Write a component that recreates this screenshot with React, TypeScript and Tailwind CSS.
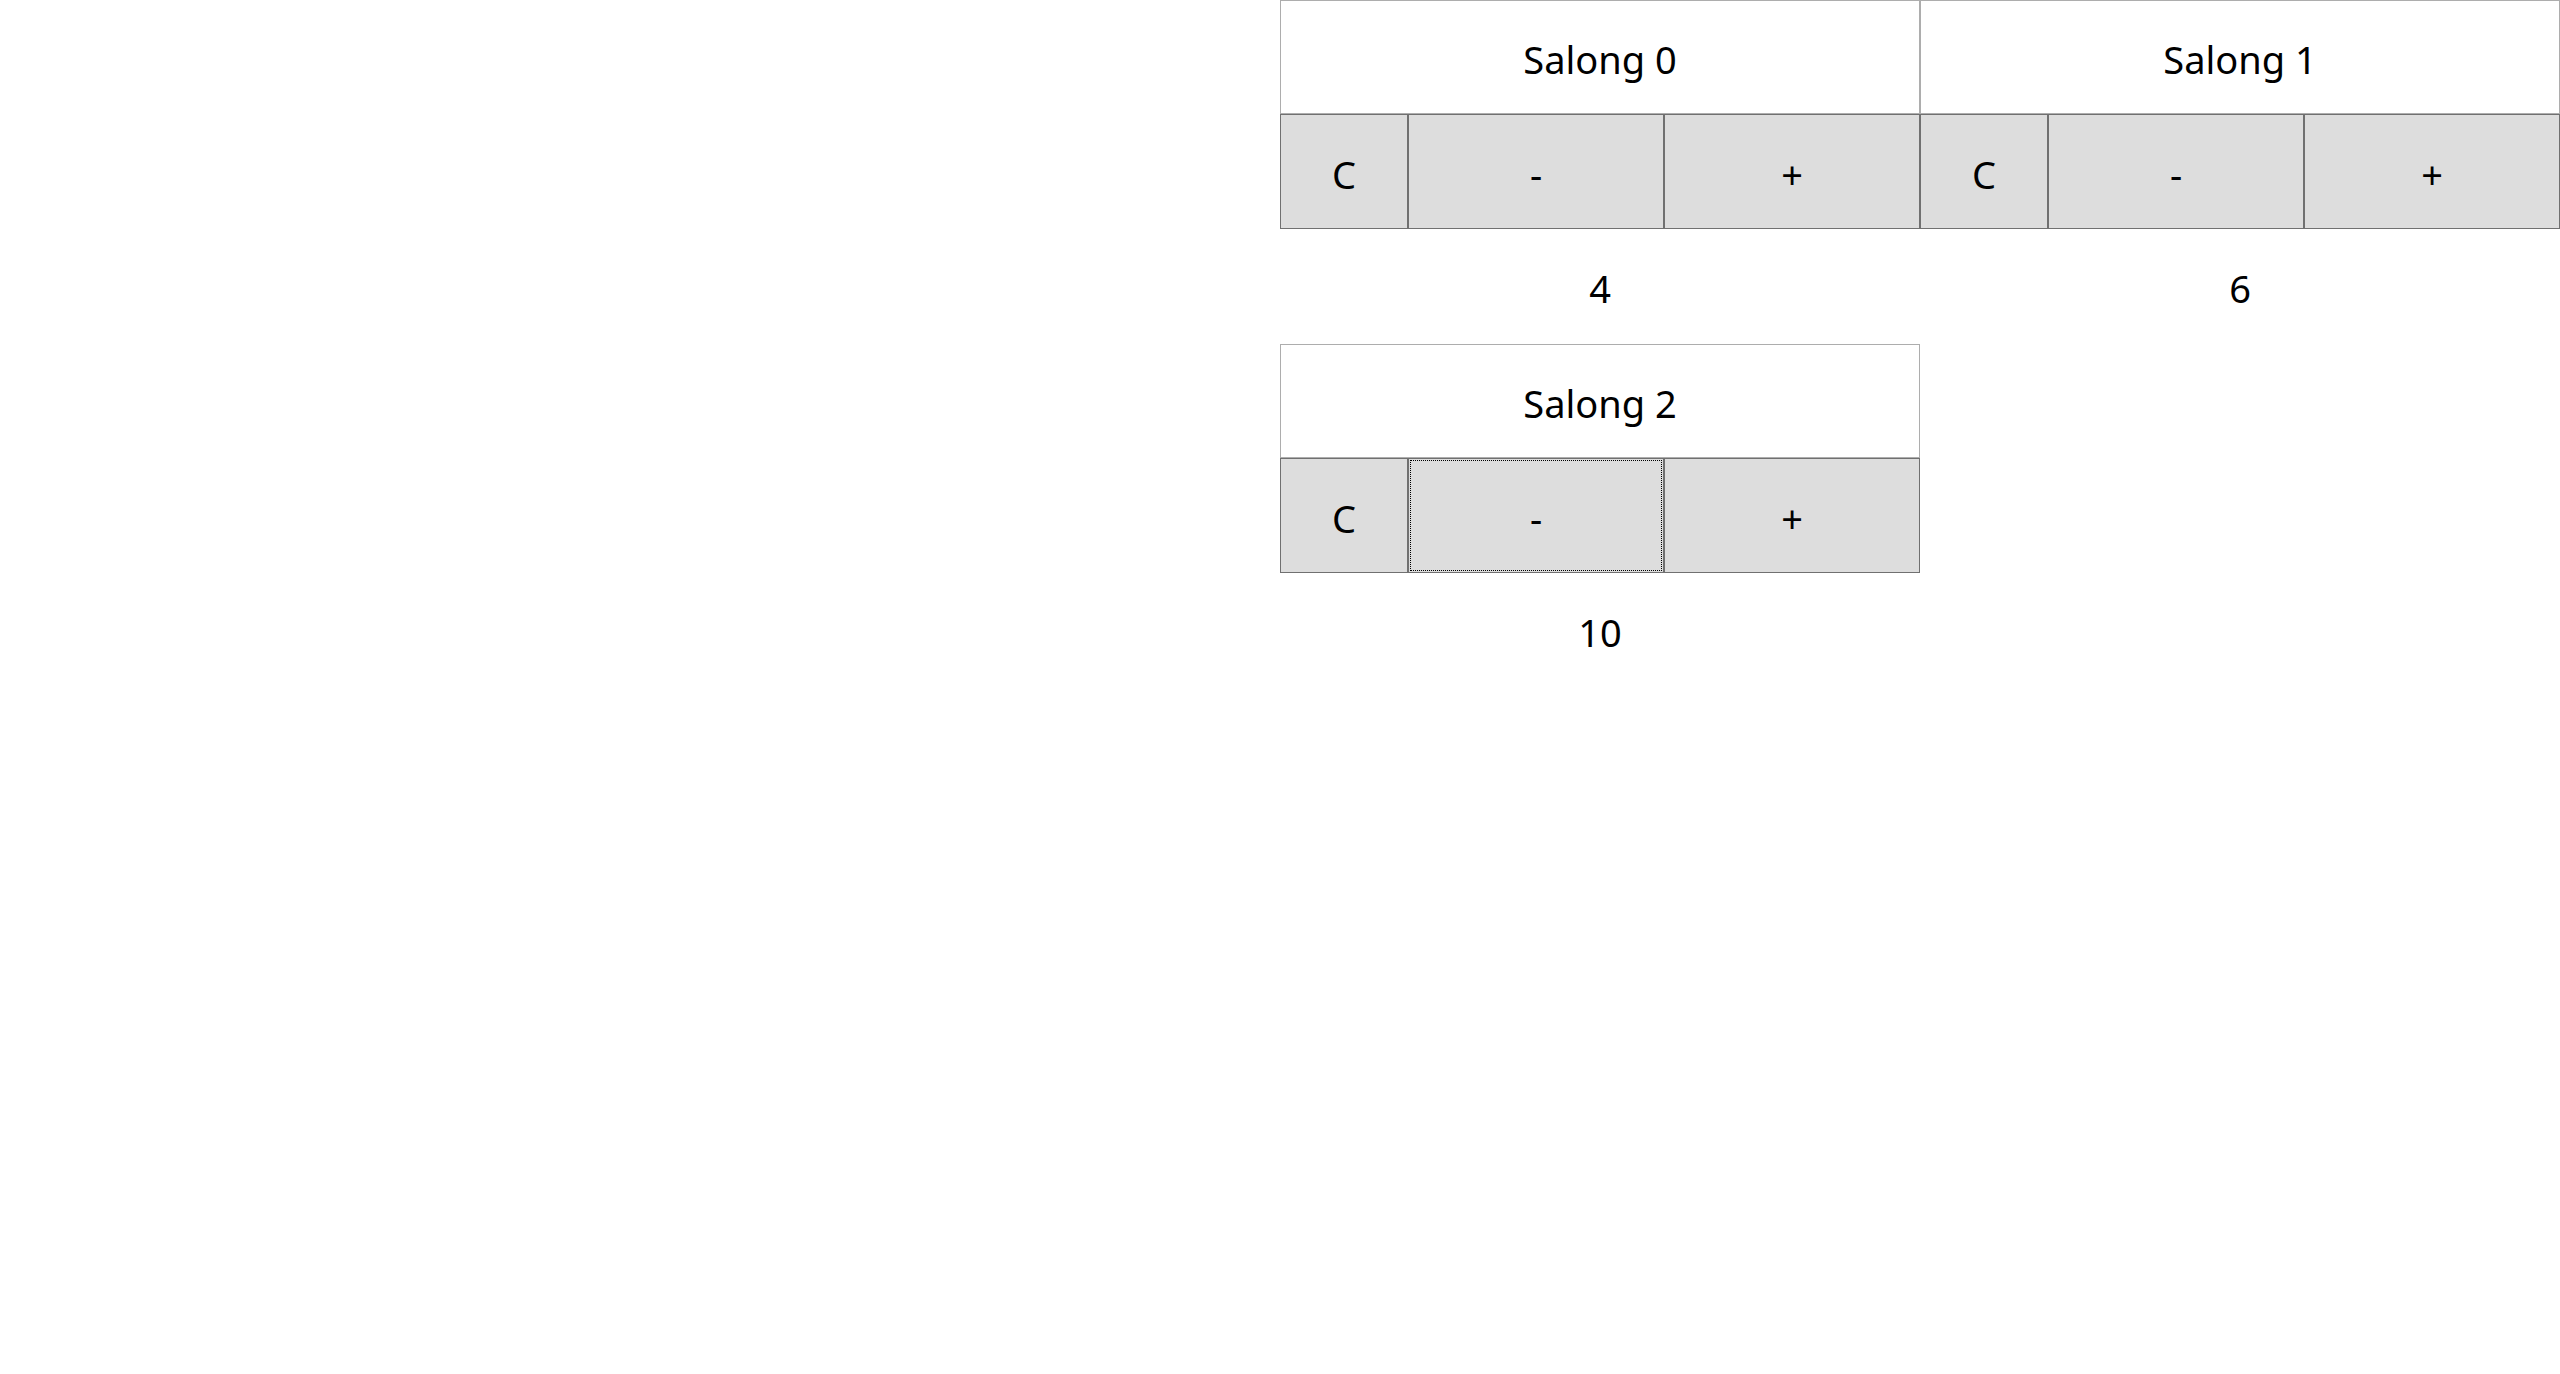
import { useState } from "react";

type Salong = { id: number; antal: number };

const startData: Salong[] = [
  { id: 0, antal: 4 },
  { id: 1, antal: 6 },
  { id: 2, antal: 10 },
];

export const App = () => {
  const [salonger, setSalonger] = useState<Salong[]>(startData);

  const andra = (id: number, nytt: (antal: number) => number) => {
    setSalonger(salonger.map((s) => (s.id === id ? { ...s, antal: nytt(s.antal) } : s)));
  };

  return (
    <div className="w-full min-h-[1374px] bg-white text-black font-['Noto_Sans','Open_Sans',sans-serif]">
      <div className="ml-auto w-[1280px] grid grid-cols-2">
        {salonger.map((salong) => (
          <div key={salong.id} className="flex flex-col">
            <div className="h-[114px] pt-[4px] border border-[#adadad] bg-white flex items-center justify-center text-[38px]">
              Salong {salong.id}
            </div>
            <div className="h-[115px] flex">
              <button
                onClick={() => andra(salong.id, () => 0)}
                className="w-[128px] h-full pt-[6px] border border-[#707070] bg-[#dddddd] text-[38px]"
              >
                C
              </button>
              <button
                onClick={() => andra(salong.id, (a) => a - 1)}
                className={
                  salong.id === 2
                    ? "flex-1 h-full pt-[6px] border border-[#707070] bg-[#dddddd] text-[38px] outline-1 outline-dotted outline-black outline-offset-[-3px]"
                    : "flex-1 h-full pt-[6px] border border-[#707070] bg-[#dddddd] text-[38px]"
                }
              >
                -
              </button>
              <button
                onClick={() => andra(salong.id, (a) => a + 1)}
                className="flex-1 h-full pt-[6px] border border-[#707070] bg-[#dddddd] text-[38px]"
              >
                +
              </button>
            </div>
            <div className="h-[115px] pt-[4px] flex items-center justify-center text-[38px]">{salong.antal}</div>
          </div>
        ))}
      </div>
    </div>
  );
};
export default App;
